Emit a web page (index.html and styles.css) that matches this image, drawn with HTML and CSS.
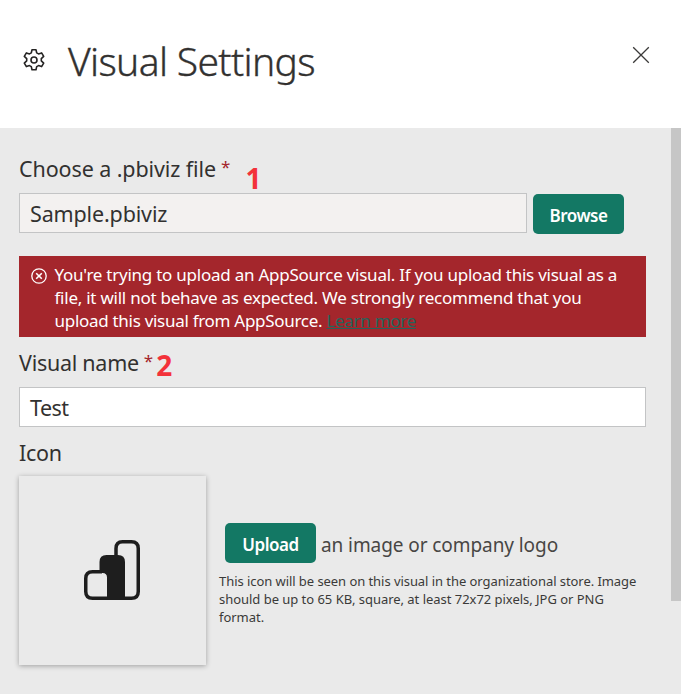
FILE: index.html
```html
<!DOCTYPE html>
<html lang="en">
<head>
<meta charset="utf-8">
<title>Visual Settings</title>
<link rel="stylesheet" href="styles.css">
</head>
<body>
<header class="header">
  <svg class="gear" viewBox="0 0 24 24" width="24" height="24" fill="none" stroke="#252423" stroke-width="1.6" stroke-linejoin="round">
    <path d="M10 1.8h4l.7 3.1 1.8 1 3.1-1 2.1 3.5-2.4 2.3v2.1l2.4 2.3-2.1 3.5-3.1-1-1.8 1-.7 3.1h-4l-.7-3.1-1.8-1-3.1 1-2.1-3.5 2.4-2.3v-2.1L2.3 8.4l2.1-3.5 3.1 1 1.8-1z"/>
    <circle cx="12" cy="12" r="3"/>
  </svg>
  <h1 class="title">Visual Settings</h1>
  <svg class="close" viewBox="0 0 18 18" width="18" height="18" stroke="#3b3a39" stroke-width="1.3"><path d="M1.2 1.2l15.6 15.6M16.8 1.2L1.2 16.8"/></svg>
</header>
<div class="body">
  <main class="form">
    <div class="label label-file"><span class="t-file">Choose a .pbiviz file</span><span class="req">*</span><span class="step step-one">1</span></div>
    <div class="file-row">
      <div class="input input-file"><span class="t-sample">Sample.pbiviz</span></div>
      <button class="button"><span class="t-browse">Browse</span></button>
    </div>
    <div class="alert">
      <svg class="alert-icon" viewBox="0 0 16 16" width="16" height="16" fill="none" stroke="#fff" stroke-width="1.3"><circle cx="8" cy="8" r="7.2"/><path stroke-width="1.6" d="M5.2 5.2l5.6 5.6M10.8 5.2l-5.6 5.6"/></svg>
      <p class="alert-text"><span>You're trying to upload an AppSource visual. If you upload this visual as a</span><br><span>file, it will not behave as expected. We strongly recommend that you</span><br><span class="a3">upload this visual from AppSource. <a class="link">Learn more</a></span></p>
    </div>
    <div class="label label-name"><span class="t-name">Visual name</span><span class="req">*</span><span class="step step-two">2</span></div>
    <div class="input"><span class="t-test">Test</span></div>
    <div class="label label-icon"><span class="t-icon">Icon</span></div>
    <div class="icon-row">
      <div class="preview">
        <svg class="chart" viewBox="0 0 56 60" width="56" height="60">
          <path d="M32 17V8.500Q32 1.750 38.500 1.750H47.500Q54.250 1.750 54.250 8.500V51.500Q54.250 58.250 47.500 58.250H8.500Q1.750 58.250 1.750 51.500V38.500Q1.750 31.750 8.500 31.750H18" fill="none" stroke="#1e1e1e" stroke-width="3.500"/>
          <path d="M15.500 32V22Q15.500 15 22.500 15H34Q41 15 41 22V59H23V37.500Q23 33 18.500 33H15.500Z" fill="#1e1e1e"/>
        </svg>
      </div>
      <div class="upload">
        <div class="upload-row"><button class="button"><span class="t-upload">Upload</span></button><span class="t-logo">an image or company logo</span></div>
        <p class="hint"><span class="hint-first">This icon will be seen on this visual in the organizational store. Image</span><br><span>should be up to 65 KB, square, at least 72x72 pixels, JPG or PNG</span><br><span>format.</span></p>
      </div>
    </div>
  </main>
  <div class="scrollbar"></div>
</div>
</body>
</html>
```

FILE: styles.css
```css
* { box-sizing: border-box; }
body { margin: 0; width: 681px; height: 694px; overflow: hidden; background: #eaeaea; color: #323130; font-family: "Noto Sans", "Open Sans", sans-serif; }
span { white-space: nowrap; }
.header { display: flex; height: 128px; background: #fff; }
.gear { margin: 48px 0 0 21.500px; flex: none; }
.title { margin: 34px 0 0 22.500px; font-size: 39px; font-weight: 300; line-height: 54px; white-space: nowrap; letter-spacing: -.66px; -webkit-text-stroke: .35px #323130; }
.close { margin: 46px 31px 0 auto; flex: none; }
.body { display: flex; height: 566px; }
.form { width: 671px; padding: 0 25px 0 19px; }
.scrollbar { width: 10px; height: 473px; background: #c6c6c6; }
.label { display: flex; height: 32px; font-size: 21.500px; line-height: 32px; }
.label-file { margin-top: 25px; height: 40px; }
.t-file { letter-spacing: -.1px; }
.t-sample { letter-spacing: -.15px; }
.t-name { letter-spacing: -.27px; }
.t-test { letter-spacing: -.5px; }
.t-icon { letter-spacing: -.3px; }
.t-browse, .t-upload { letter-spacing: -.45px; }
.req { margin-left: 5px; font-size: 17px; line-height: 28px; color: #a4262c; }
.step { font-size: 28px; font-weight: 700; color: #f3323a; }
.step-one { margin: 9px 0 0 15px; }
.step-two { margin: 2px 0 0 3px; }
.file-row { display: flex; gap: 6px; }
.input { height: 40px; padding: 0 10px; border: 1px solid #c3c4c5; background: #fff; font-size: 21.500px; line-height: 39px; }
.input-file { width: 508px; background: #f3f1f0; }
.button { width: 91px; height: 40px; margin: 1px 0 0; padding: 3px 0 0; border: 0; border-radius: 5px; background: #137864; color: #fff; font: 600 17px/37px "Noto Sans", "Open Sans", sans-serif; }
.alert { display: flex; height: 81px; margin-top: 22px; padding: 7px 0 0 11.500px; background: #a4262c; color: #fff; }
.alert-icon { margin-top: 5px; flex: none; }
.alert-text { margin: 0 0 0 8px; font-size: 17px; line-height: 23px; letter-spacing: -.245px; }
.a3 { letter-spacing: -.29px; }
.link { color: #24655b; text-decoration: underline; }
.label-name { margin-top: 10px; height: 40px; }
.label-icon { margin-top: 10px; height: 39px; }
.icon-row { display: flex; }
.preview { display: flex; align-items: center; justify-content: center; width: 187px; height: 189px; box-shadow: 0 1px 5px rgba(0,0,0,.32); }
.chart { margin: 0 1px 1px 0; }
.upload { margin-left: 13px; padding-top: 46px; }
.upload-row { display: flex; padding-left: 6px; }
.t-logo { margin-left: 5px; font-size: 19px; line-height: 46px; height: 44px; letter-spacing: -.08px; color: #484644; }
.hint { margin: 6px 0 0; font-size: 13px; line-height: 18px; letter-spacing: -.03px; color: #3b3a39; }
.hint-first { letter-spacing: -.06px; }
```
